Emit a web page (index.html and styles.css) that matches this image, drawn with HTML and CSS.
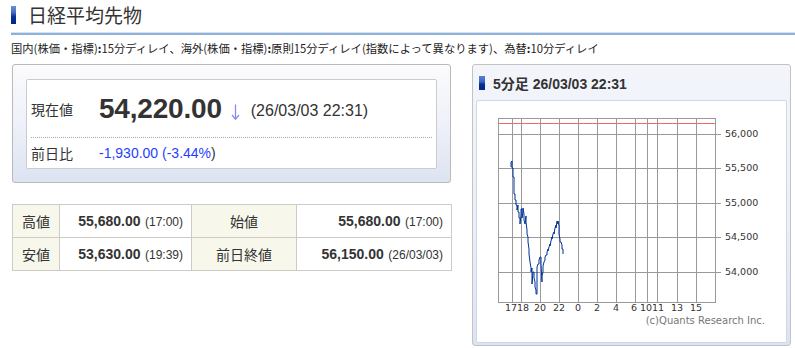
FILE: index.html
```html
<!DOCTYPE html>
<html lang="ja">
<head>
<meta charset="utf-8">
<title>日経平均先物</title>
<link rel="stylesheet" href="styles.css">
</head>
<body>
<div class="page">
  <div class="title"><span class="title-bar"></span><h1 class="title-text">日経平均先物</h1></div>
  <div class="rule"></div>
  <p class="note">国内(株価・指標)<b>:</b>15分ディレイ、海外(株価・指標)<b>:</b>原則15分ディレイ(指数によって異なります)、為替<b>:</b>10分ディレイ</p>
  <div class="main">
    <div class="left">
      <div class="quote-box">
        <div class="quote-inner">
          <div class="q-row q-row-main">
            <span class="q-label">現在値</span>
            <span class="q-price">54,220.00</span>
            <svg class="q-arrow" width="9" height="16" viewBox="0 0 9 16"><path d="M4.5 0.5 V15" stroke="#8a8af0" stroke-width="1.3" fill="none"/><path d="M1 11 L4.5 15.2 L8 11" stroke="#8a8af0" stroke-width="1.3" fill="none"/></svg>
            <span class="q-time">(26/03/03 22:31)</span>
          </div>
          <div class="q-row q-row-sub">
            <span class="q-label">前日比</span>
            <span class="q-change">-1,930.00 (-3.44%<span class="q-paren">)</span></span>
          </div>
        </div>
      </div>
      <table class="stats">
        <tr>
          <th class="c1">高値</th>
          <td class="c2"><b>55,680.00</b> <small>(17:00)</small></td>
          <th class="c3">始値</th>
          <td class="c4"><b>55,680.00</b> <small>(17:00)</small></td>
        </tr>
        <tr>
          <th class="c1">安値</th>
          <td class="c2"><b>53,630.00</b> <small>(19:39)</small></td>
          <th class="c3">前日終値</th>
          <td class="c4"><b>56,150.00</b> <small>(26/03/03)</small></td>
        </tr>
      </table>
    </div>
    <div class="chart-panel">
      <div class="chart-head"><span class="head-bar"></span><span class="head-text">5分足 26/03/03 22:31</span></div>
      <div class="chart-inner">
        <svg class="chart" width="309" height="241" viewBox="477 99 309 241">
          <g stroke="#999" stroke-width="1" fill="none" shape-rendering="crispEdges">
            <rect x="498.5" y="116.5" width="217" height="184"/>
            <line x1="498" y1="132.5" x2="721" y2="132.5"/>
            <line x1="498" y1="166.5" x2="721" y2="166.5"/>
            <line x1="498" y1="201.5" x2="721" y2="201.5"/>
            <line x1="498" y1="235.5" x2="721" y2="235.5"/>
            <line x1="498" y1="270.5" x2="721" y2="270.5"/>
            <line x1="512.5" y1="116" x2="512.5" y2="300"/>
            <line x1="521.5" y1="116" x2="521.5" y2="300"/>
            <line x1="540.5" y1="116" x2="540.5" y2="300"/>
            <line x1="559.5" y1="116" x2="559.5" y2="300"/>
            <line x1="578.5" y1="116" x2="578.5" y2="300"/>
            <line x1="597.5" y1="116" x2="597.5" y2="300"/>
            <line x1="616.5" y1="116" x2="616.5" y2="300"/>
            <line x1="635.5" y1="116" x2="635.5" y2="300"/>
            <line x1="647.5" y1="116" x2="647.5" y2="300"/>
            <line x1="657.5" y1="116" x2="657.5" y2="300"/>
            <line x1="677.5" y1="116" x2="677.5" y2="300"/>
            <line x1="696.5" y1="116" x2="696.5" y2="300"/>
          </g>
          <line x1="499" y1="121.5" x2="715" y2="121.5" stroke="#f26a6a" stroke-width="1" shape-rendering="crispEdges"/>
          <polyline fill="none" stroke="#003399" stroke-width="1" points="511,165 511,160 512,159 512,166 513,166 513,175 514,175 514,192 515,192 515,198 516,198 516,203 517,203 517,208 518,203 518,210 519,210 519,216 520,216 520,222 521,213 521,207 522,207 522,216 523,210 523,206 524,212 524,218 525,222 526,214 526,220 527,228 527,232 528,235 528,240 529,247 529,252 530,260 531,266 531,270 532,266 532,282 533,270 534,270 534,276 535,280 535,285 536,288 536,292 537,292 537,265 538,262 539,262 539,258 540,255 541,255 541,262 542,280 542,274 543,270 543,264 544,260 545,258 545,255 546,253 547,253 547,250 548,247 548,249 549,245 550,242 550,244 551,239 552,235 552,237 553,232 554,230 554,232 555,226 556,223 556,226 557,219 558,222 558,219 559,224 559,232 560,237 560,240 561,240 562,243 562,247 563,247 563,252"/>
          <g class="ylab">
            <text x="725" y="135">56,000</text>
            <text x="725" y="169">55,500</text>
            <text x="725" y="204">55,000</text>
            <text x="725" y="238">54,500</text>
            <text x="725" y="273">54,000</text>
          </g>
          <g class="xlab" text-anchor="middle">
            <text x="517" y="309">1718</text>
            <text x="540" y="309">20</text>
            <text x="559" y="309">22</text>
            <text x="578" y="309">0</text>
            <text x="597" y="309">2</text>
            <text x="616" y="309">4</text>
            <text x="634" y="309">6</text>
            <text x="652" y="309">1011</text>
            <text x="677" y="309">13</text>
            <text x="696" y="309">15</text>
          </g>
          <text class="copy" x="765" y="322" text-anchor="end">(c)Quants Research Inc.</text>
        </svg>
      </div>
    </div>
  </div>
</div>
</body>
</html>
```

FILE: styles.css
```css
* { box-sizing: border-box; }
html, body { margin: 0; padding: 0; background: #fff; }
body {
  width: 795px;
  height: 348px;
  overflow: hidden;
  font-family: "Liberation Sans", "Noto Sans CJK JP", sans-serif;
  color: #333;
}
.page { padding: 6px 0 0 0; }

.title { display: flex; align-items: center; padding-left: 11px; height: 18px; }
.title-bar {
  width: 5px; height: 18px;
  background: linear-gradient(to bottom, #6f8fd4 0%, #4a6ec4 35%, #0a2f96 60%, #002a8c 100%);
}
.title-text {
  margin: 0 0 0 12px;
  font-family: "Noto Sans CJK JP", sans-serif;
  font-size: 19px;
  font-weight: 400;
  line-height: 18px;
  color: #333;
}
.rule {
  margin: 8px 0 0 11px;
  height: 3px;
  border-top: 1px solid #d4e3f2;
  border-bottom: 2px solid #8fb1d9;
}
.note {
  margin: 5px 0 0 11px;
  font-family: "Noto Sans CJK JP", sans-serif;
  font-size: 11.3px;
  line-height: 16px;
  color: #222;
  white-space: nowrap;
}
.note b { font-weight: 700; }

.main { display: flex; align-items: flex-start; margin-top: 8px; padding-left: 12px; gap: 21px; }
.left { width: 439px; }

.quote-box {
  width: 439px; height: 119px;
  border: 1px solid #b9b9b9;
  border-radius: 3px;
  padding: 14px 13px 13px 13px;
  background: linear-gradient(to bottom, #fbfbfd 0%, #eef1f9 50%, #dde3f2 100%);
}
.quote-inner {
  height: 90px;
  background: #fff;
  border: 1px solid #cccccc;
  border-radius: 2px;
  padding: 0 4px;
}
.q-row { display: flex; align-items: center; }
.q-row-main { height: 58px; border-bottom: 1px dotted #a8a8a8; }
.q-row-sub { height: 30px; }
.q-label {
  width: 68px;
  font-family: "Noto Sans CJK JP", sans-serif;
  font-size: 14px;
  color: #333;
}
.q-price { font-size: 28px; font-weight: 700; color: #333; letter-spacing: -0.2px; }
.q-arrow { margin-left: 9px; margin-top: 6px; }
.q-time { margin-left: 11px; font-size: 16px; color: #333; margin-top: 5px; }
.q-change { font-size: 14px; color: #1f3fff; }
.q-paren { color: #333; }

.stats {
  margin-top: 21px;
  width: 439px;
  border-collapse: collapse;
  table-layout: fixed;
}
.stats th, .stats td {
  border: 1px solid #cdccc4;
  height: 33px;
  padding: 0 8px;
}
.stats th {
  background: #f7f7ec;
  font-family: "Noto Sans CJK JP", sans-serif;
  font-size: 14px;
  font-weight: 400;
  color: #333;
  text-align: center;
}
.stats td { text-align: right; white-space: nowrap; }
.stats td b { font-size: 14px; font-weight: 700; color: #333; }
.stats td small { font-size: 12px; color: #333; }
.c1 { width: 47px; }
.c2 { width: 132px; }
.c3 { width: 105px; }
.c4 { width: 155px; }

.chart-panel {
  width: 319px; height: 282px;
  border: 1px solid #c3c3c3;
  border-radius: 3px;
  padding: 0 3px 2px 3px;
  background: linear-gradient(to bottom, #f3f5fb 0%, #eaeef8 60%, #dce3f2 100%);
}
.chart-head { display: flex; align-items: center; height: 35px; padding-left: 3px; }
.head-bar {
  width: 6px; height: 14px;
  background: linear-gradient(to bottom, #5a7fd0 0%, #3f66c0 40%, #062d92 60%, #002a8c 100%);
}
.head-text { margin-left: 8px; font-family: "Liberation Sans", "Noto Sans CJK JP", sans-serif; font-size: 14px; font-weight: 700; color: #333; }
.chart-inner {
  height: 243px;
  background: #fff;
  border: 1px solid #cfd7e8;
  border-radius: 2px;
}
.chart { display: block; }
.ylab text, .xlab text { font-family: "DejaVu Sans", sans-serif; font-size: 9.5px; fill: #333; }
.copy { font-family: "DejaVu Sans", sans-serif; font-size: 10px; fill: #777; }
```
